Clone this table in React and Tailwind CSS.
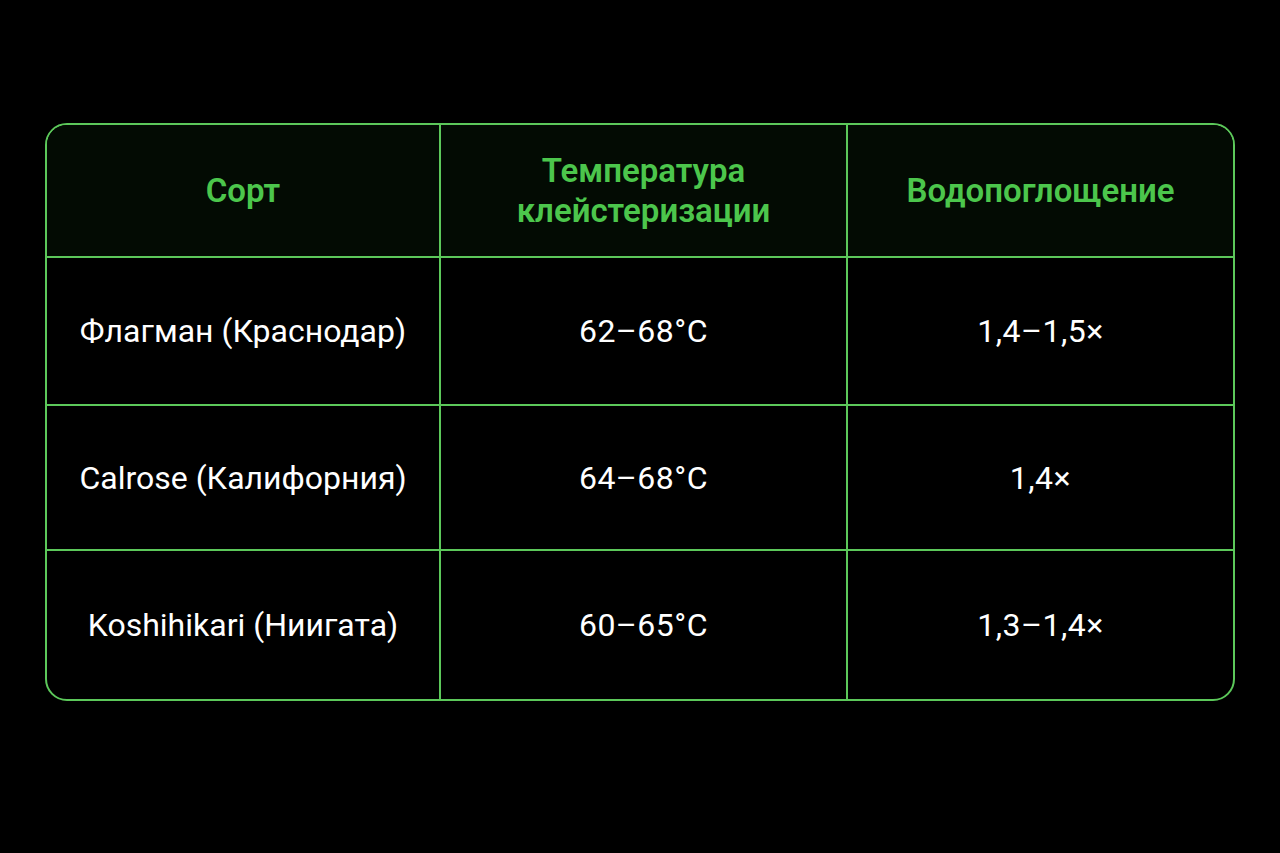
import React from 'react';

const rows = [
  ['Флагман (Краснодар)', '62–68°C', '1,4–1,5×'],
  ['Calrose (Калифорния)', '64–68°C', '1,4×'],
  ['Koshihikari (Ниигата)', '60–65°C', '1,3–1,4×'],
];

const heights = ['h-[148px]', 'h-[145px]', 'h-[150px]'];

export default function App() {
  return (
    <div className="min-h-screen w-full bg-black pt-[123px] px-[45px]" style={{ fontFamily: 'Roboto, "Noto Sans", sans-serif' }}>
      <div className="w-[1190px] border-2 border-[#5cc85a] rounded-[22px] overflow-hidden">
        {/* header */}
        <div className="grid grid-cols-[392px_407px_1fr] h-[131px] bg-[#030b03] text-[#4cc64c] font-semibold text-[33px] leading-[40px]">
          <div className="flex items-center justify-center text-center">Сорт</div>
          <div className="flex items-center justify-center text-center border-l-2 border-[#5cc85a]">
            Температура<br />клейстеризации
          </div>
          <div className="flex items-center justify-center text-center border-l-2 border-[#5cc85a]">Водопоглощение</div>
        </div>

        {rows.map((r, i) => (
          <div key={i} className={`grid grid-cols-[392px_407px_1fr] border-t-2 border-[#5cc85a] text-white text-[32px] ${heights[i]}`}>
            <div className="flex items-center justify-center text-center">{r[0]}</div>
            <div className="flex items-center justify-center text-center border-l-2 border-[#5cc85a] tracking-[0.5px]">{r[1]}</div>
            <div className="flex items-center justify-center text-center border-l-2 border-[#5cc85a] tracking-[0.5px]">{r[2]}</div>
          </div>
        ))}
      </div>
    </div>
  );
}
